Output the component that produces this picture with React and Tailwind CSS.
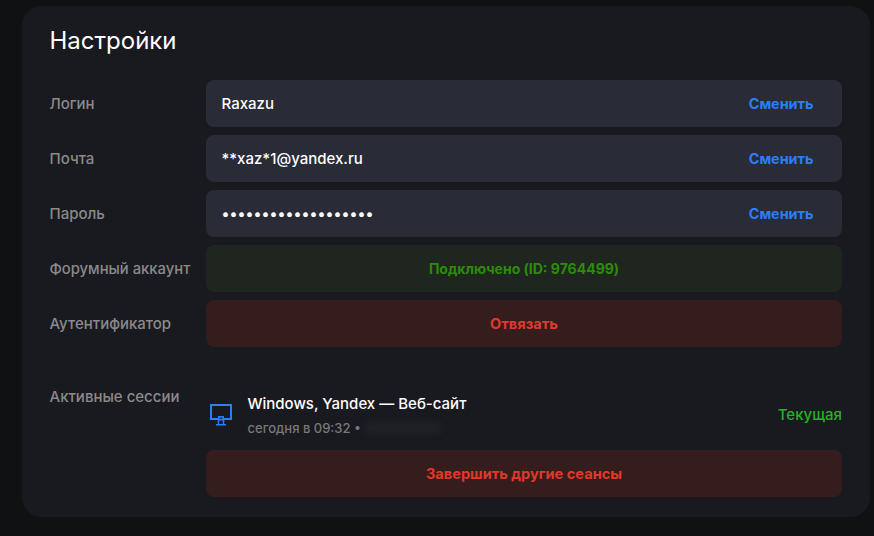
const rows = [
  { label: "Логин", value: "Raxazu" },
  { label: "Почта", value: "**xaz*1@yandex.ru" },
  { label: "Пароль", value: "•••••••••••••••••••" },
];

function Monitor() {
  return (
    <svg className="-mt-px" width="24" height="24" viewBox="0 0 24 24" fill="none" stroke="#2a7ff5" strokeWidth="2">
      <rect x="2" y="2" width="20" height="14" />
      <rect x="9.75" y="13.75" width="4.5" height="3" strokeWidth="1.5" fill="#1d3a66" />
      <path d="M9.5 17v5M14.5 17v5" strokeWidth="1.5" />
      <path d="M7 21.75h10" strokeWidth="1.5" />
    </svg>
  );
}

export default function App() {
  return (
    <div className="min-h-[536px] overflow-hidden bg-[#101113] pl-[22px] pt-[6px] font-['Inter',sans-serif] font-medium">
      <div className="h-[511px] w-[848px] rounded-[20px] bg-[#191a20] pl-[27.5px] pr-7 pt-[19px]">
        <h1 className="mb-[24px] h-[31px] text-2xl font-normal leading-[31px] text-white">Настройки</h1>

        <div className="flex flex-col gap-2">
          {rows.map((r) => (
            <div key={r.label} className="flex items-center">
              <div className="w-[156.5px] pt-[2px] text-[15px] text-[#8a8a8a]">{r.label}</div>
              <div className="flex h-[47px] flex-1 items-center justify-between rounded-lg bg-[#292c36] pl-[15.5px] pr-[28.5px] text-[15px] text-white">
                <span className="pt-[2px]">{r.value}</span>
                <button className="text-[14.4px] font-bold text-[#2a7ff5]">Сменить</button>
              </div>
            </div>
          ))}

          <div className="flex items-center">
            <div className="w-[156.5px] whitespace-nowrap pt-[2px] text-[14.8px] text-[#8a8a8a]">Форумный аккаунт</div>
            <div className="flex h-[47px] flex-1 items-center justify-center rounded-lg bg-[#1e261f] text-[14px] font-bold text-[#2e8b0a]">
              Подключено (ID: 9764499)
            </div>
          </div>

          <div className="flex items-center">
            <div className="w-[156.5px] pt-[2px] text-[15px] text-[#8a8a8a]">Аутентификатор</div>
            <button className="h-[47px] flex-1 rounded-lg bg-[#351c1d] pt-[2px] text-[14.6px] font-bold text-[#e0392b]">
              Отвязать
            </button>
          </div>
        </div>

        <div className="mt-[38px] flex">
          <div className="w-[156.5px] pt-px text-[15px] leading-[22px] text-[#8a8a8a]">Активные сессии</div>
          <div className="flex-1">
            <div className="flex h-[61px] items-center justify-between">
              <div className="flex items-center gap-[14.5px] pl-[3px]">
                <Monitor />
                <div>
                  <div className="text-[15px] leading-[22px] text-white">Windows, Yandex — Веб-сайт</div>
                  <div className="mt-[3px] flex items-center gap-1 text-[13px] leading-5 text-[#77787c]">
                    <span>сегодня в 09:32 •</span>
                    <span className="h-3 w-[76px] rounded-full bg-[#202127] blur-[3px]" />
                  </div>
                </div>
              </div>
              <span className="text-[15px] text-[#26b322]">Текущая</span>
            </div>
            <button className="mt-[4px] h-[47px] w-full rounded-lg bg-[#351c1d] pt-[2px] text-[14.6px] font-bold text-[#e0392b]">
              Завершить другие сеансы
            </button>
          </div>
        </div>
      </div>
    </div>
  );
}
